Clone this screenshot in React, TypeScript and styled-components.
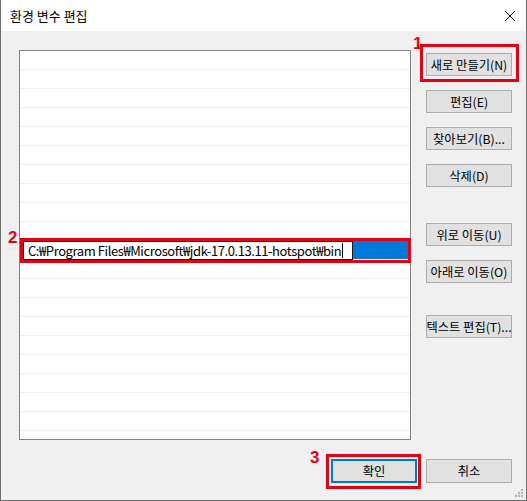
import React from 'react';
import styled, { createGlobalStyle } from 'styled-components';

const Global = createGlobalStyle`
  html, body { margin: 0; padding: 0; background: #ffffff; }
  body { font-family: "Malgun Gothic", "Noto Sans CJK KR", sans-serif; }
  #root { width: 527px; height: 501px; }
`;

const Window = styled.div`
  width: 527px;
  height: 501px;
  box-sizing: border-box;
  border: 1px solid #6d6d6d;
  border-top: none;
  display: flex;
  flex-direction: column;
  background: #f0f0f0;
`;

const TitleBar = styled.div`
  flex: none;
  height: 31px;
  background: #ffffff;
  display: flex;
  align-items: center;
  justify-content: space-between;
  padding: 0 10px 0 9px;
`;

const Title = styled.span`
  font-size: 13px;
  color: #000;
  padding-bottom: 1px;
`;

const CloseBox = styled.div`
  width: 12px;
  height: 12px;
  display: flex;
`;

const Body = styled.div`
  flex: 1;
  display: grid;
  grid-template-columns: 392px 86px;
  grid-template-rows: 390px auto;
  column-gap: 15px;
  padding: 19px 14px 0 18px;
  position: relative;
`;

const ListArea = styled.div`
  position: relative;
  display: flex;
`;

const List = styled.div`
  flex: 1;
  box-sizing: border-box;
  border: 1px solid #828282;
  background: #ffffff;
  overflow: hidden;
  display: flex;
  flex-direction: column;
`;

const Row = styled.div<{ $selected?: boolean }>`
  flex: none;
  box-sizing: border-box;
  height: 19px;
  border-bottom: 1px solid #f0f0f0;
  background: ${(p) => (p.$selected ? '#0078d7' : '#ffffff')};
  display: flex;
  align-items: stretch;
`;

const EditBox = styled.div`
  box-sizing: border-box;
  width: 330px;
  margin: 0 0 0 3px;
  height: 19px;
  border: 1px solid #1a1a1a;
  background: #ffffff;
  display: flex;
  align-items: center;
  padding-left: 4px;
  font-size: 13px;
  color: #000;
  white-space: nowrap;
  letter-spacing: -0.42px;
`;

const Caret = styled.span`
  display: inline-block;
  width: 1px;
  height: 15px;
  background: #000;
  margin-left: 1px;
`;

const ButtonColumn = styled.div`
  display: flex;
  flex-direction: column;
  padding-top: 3px;
`;

const Btn = styled.div<{ $gap?: number; $default?: boolean; $h?: number }>`
  box-sizing: border-box;
  width: 86px;
  height: ${(p) => p.$h ?? 23}px;
  margin-top: ${(p) => p.$gap ?? 0}px;
  background: #e1e1e1;
  border: ${(p) => (p.$default ? '2px solid #0078d7' : '1px solid #adadad')};
  display: flex;
  align-items: center;
  justify-content: center;
  font-size: 12.3px;
  color: #000;
  white-space: nowrap;
`;

const Footer = styled.div`
  grid-column: 1 / span 2;
  display: flex;
  justify-content: flex-end;
  align-items: flex-start;
  gap: 9px;
  padding-top: 19px;
`;

const Annotated = styled.div`
  position: relative;
  display: flex;
`;

const Frame = styled.div<{ $t: number; $r: number; $b?: number; $l: number; $h?: number }>`
  position: absolute;
  top: ${(p) => p.$t}px;
  right: ${(p) => p.$r}px;
  ${(p) => (p.$h !== undefined ? `height: ${p.$h}px;` : `bottom: ${p.$b ?? 0}px;`)}
  left: ${(p) => p.$l}px;
  box-sizing: border-box;
  border: 3px solid #e60012;
  pointer-events: none;
`;

const Badge = styled.span<{ $x: number; $y: number }>`
  position: absolute;
  left: ${(p) => p.$x}px;
  top: ${(p) => p.$y}px;
  font-family: "Liberation Sans", Arial, sans-serif;
  font-weight: bold;
  font-size: 17px;
  line-height: 17px;
  color: #e60012;
`;

const Grip = styled.svg`
  position: absolute;
  right: 3px;
  bottom: 3px;
`;

const ROWS = 21;
const SELECTED = 10;
const ROW_H = 19;

export default function App() {
  const selTop = 1 + SELECTED * ROW_H;
  return (
    <>
      <Global />
      <Window>
        <TitleBar>
          <Title>환경 변수 편집</Title>
          <CloseBox>
            <svg width="12" height="12" viewBox="0 0 12 12">
              <path d="M1 1 L11 11 M11 1 L1 11" stroke="#000" strokeWidth="1" fill="none" />
            </svg>
          </CloseBox>
        </TitleBar>
        <Body>
          <ListArea>
            <List>
              {Array.from({ length: ROWS }).map((_, i) =>
                i === SELECTED ? (
                  <Row key={i} $selected>
                    <EditBox>
                      C:₩Program Files₩Microsoft₩jdk-17.0.13.11-hotspot₩bin
                      <Caret />
                    </EditBox>
                  </Row>
                ) : (
                  <Row key={i} />
                )
              )}
            </List>
            <Frame $t={selTop - 3} $r={0} $h={25} $l={1} />
            <Badge $x={-11} $y={selTop - 12}>2</Badge>
          </ListArea>
          <ButtonColumn>
            <Annotated>
              <Btn>새로 만들기(N)</Btn>
              <Frame $t={-9} $r={-7} $b={-6} $l={-6} />
              <Badge $x={-13} $y={-18}>1</Badge>
            </Annotated>
            <Btn $gap={14}>편집(E)</Btn>
            <Btn $gap={14}>찾아보기(B)...</Btn>
            <Btn $gap={14}>삭제(D)</Btn>
            <Btn $gap={36}>위로 이동(U)</Btn>
            <Btn $gap={14}>아래로 이동(O)</Btn>
            <Btn $gap={32}>텍스트 편집(T)...</Btn>
          </ButtonColumn>
          <Footer>
            <Annotated>
              <Btn $default $h={24}>확인</Btn>
              <Frame $t={-5} $r={-4} $b={-6} $l={-5} />
              <Badge $x={-21} $y={-10}>3</Badge>
            </Annotated>
            <Btn $h={24}>취소</Btn>
          </Footer>
          <Grip width="8" height="8" viewBox="0 0 8 8">
            <rect x="6" y="0" width="2" height="2" fill="#b4b4b4" />
            <rect x="3" y="3" width="2" height="2" fill="#b4b4b4" />
            <rect x="6" y="3" width="2" height="2" fill="#b4b4b4" />
            <rect x="0" y="6" width="2" height="2" fill="#b4b4b4" />
            <rect x="3" y="6" width="2" height="2" fill="#b4b4b4" />
            <rect x="6" y="6" width="2" height="2" fill="#b4b4b4" />
          </Grip>
        </Body>
      </Window>
    </>
  );
}
